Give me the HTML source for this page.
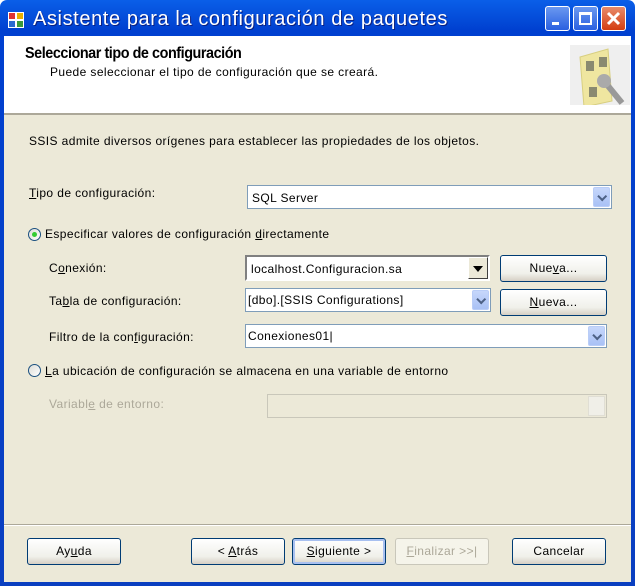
<!DOCTYPE html>
<html><head><meta charset="utf-8"><style>
*{margin:0;padding:0;box-sizing:border-box}
body{width:635px;height:586px;overflow:hidden;font-family:"Liberation Sans",sans-serif;font-size:12px;letter-spacing:0.4px;color:#000;background:#fff}
.win{position:absolute;left:0;top:0;width:635px;height:586px;background:linear-gradient(#0a5fe8,#0040d0 30px,#0a3fc0);border-radius:7px 7px 0 0}
.title{position:absolute;left:33px;top:8px;color:#fff;font-size:20px;font-weight:normal;text-shadow:1px 1px #0a1f80;letter-spacing:0.6px}
.client{position:absolute;left:4px;top:36px;width:627px;height:546px;background:#ece9d8}
.hdr{position:absolute;left:0;top:0;width:627px;height:79px;background:#fff;border-bottom:2px solid #aca899}
.a{position:absolute;white-space:nowrap}
.cb{position:absolute;background:#fff;border:1px solid #7f9db9}
.dd{position:absolute;right:1px;top:1px;bottom:1px;width:17px;background:linear-gradient(#c6d7fb,#a9c1f5);border-radius:2px;border:1px solid #b9cdf7}
.dd:after{content:"";position:absolute;left:4px;top:7px;width:5px;height:5px;border-right:2px solid #4d6185;border-bottom:2px solid #4d6185;transform:rotate(45deg) translate(-1px,-2px)}
.btn{position:absolute;height:27px;border:1px solid #003c74;border-radius:3px;background:linear-gradient(#fff,#f0f0ea 70%,#d6d0c5);text-align:center;line-height:25px}
u{text-decoration:underline}
.rad{position:absolute;width:13px;height:13px;border:1px solid #1c5180;border-radius:50%;background:linear-gradient(135deg,#dcdcd6,#fff)}
</style></head><body>
<div class="win">
<svg style="position:absolute;left:8px;top:12px" width="16" height="16"><rect x="0" y="0" width="16" height="16" fill="#fff"/><rect x="1" y="1" width="6" height="6" fill="#d33"/><rect x="9" y="1" width="6" height="6" fill="#e9b000"/><rect x="1" y="9" width="6" height="6" fill="#2a6ad0"/><rect x="9" y="9" width="6" height="6" fill="#3a9a3a"/></svg>
<div class="title">Asistente para la configuración de paquetes</div>
<div style="position:absolute;left:545px;top:6px;width:25px;height:25px;border:1px solid #fff;border-radius:3px;background:linear-gradient(#6a98f0,#2a60e0)"><div style="position:absolute;left:6px;top:15px;width:7px;height:3px;background:#fff"></div></div>
<div style="position:absolute;left:573px;top:6px;width:25px;height:25px;border:1px solid #fff;border-radius:3px;background:linear-gradient(#6a98f0,#2a60e0)"><div style="position:absolute;left:5px;top:5px;width:13px;height:13px;border:2px solid #fff;border-top-width:3px"></div></div>
<div style="position:absolute;left:601px;top:6px;width:25px;height:25px;border:1px solid #fff;border-radius:3px;background:linear-gradient(#e88a6a,#d43d12)"><svg width="23" height="23" style="position:absolute;left:0;top:0"><path d="M6 6L17 17M17 6L6 17" stroke="#fff" stroke-width="3"/></svg></div>
<div class="client">
<div class="hdr">
<div class="a" style="left:21px;top:9px;font-size:16px;font-weight:bold;letter-spacing:-0.5px;transform:scaleX(0.9);transform-origin:left">Seleccionar tipo de configuración</div>
<div class="a" style="left:46px;top:29px">Puede seleccionar el tipo de configuración que se creará.</div>
<svg style="position:absolute;left:566px;top:9px" width="60" height="60"><rect width="60" height="60" fill="#efefef"/><path d="M10 12L38 4L42 56L14 62Z" fill="#efe6a0" stroke="#d8cf80"/><rect x="16" y="16" width="8" height="10" fill="#8a8a70"/><rect x="29" y="12" width="8" height="10" fill="#8a8a70"/><rect x="19" y="42" width="8" height="10" fill="#8a8a70"/><path d="M34 36L52 58" stroke="#999" stroke-width="6"/><circle cx="34" cy="36" r="7" fill="#aaa"/></svg>
</div>
<div class="a" style="left:25px;top:98px">SSIS admite diversos orígenes para establecer las propiedades de los objetos.</div>
<div class="a" style="left:25px;top:150px"><u>T</u>ipo de configuración:</div>
<div class="cb" style="left:243px;top:149px;width:365px;height:24px"><span class="a" style="left:4px;top:5px">SQL Server</span><div class="dd"></div></div>
<div class="rad" style="left:24px;top:192px"><div style="position:absolute;left:3px;top:3px;width:5px;height:5px;border-radius:50%;background:#3c3"></div></div>
<div class="a" style="left:41px;top:191px">Especificar valores de configuración <u>d</u>irectamente</div>
<div class="a" style="left:45px;top:225px">C<u>o</u>nexión:</div>
<div style="position:absolute;left:241px;top:219px;width:245px;height:26px;background:#fff;border:2px solid;border-color:#808080 #fff #fff #808080"><span class="a" style="left:4px;top:5px">localhost.Configuracion.sa</span><div style="position:absolute;right:0;top:0;width:20px;height:22px;background:#ece9d8;border:1px solid;border-color:#fff #404040 #404040 #fff"><div style="position:absolute;left:4px;top:8px;border-left:5px solid transparent;border-right:5px solid transparent;border-top:6px solid #000"></div></div></div>
<div class="btn" style="left:496px;top:219px;width:107px">Nue<u>v</u>a...</div>
<div class="a" style="left:45px;top:258px">Ta<u>b</u>la de configuración:</div>
<div class="cb" style="left:241px;top:252px;width:246px;height:24px"><span class="a" style="left:2px;top:4px">[dbo].[SSIS Configurations]</span><div class="dd"></div></div>
<div class="btn" style="left:496px;top:253px;width:107px"><u>N</u>ueva...</div>
<div class="a" style="left:45px;top:294px">Filtro de la con<u>f</u>iguración:</div>
<div class="cb" style="left:241px;top:288px;width:362px;height:24px"><span class="a" style="left:2px;top:4px">Conexiones01|</span><div class="dd"></div></div>
<div class="rad" style="left:24px;top:328px"></div>
<div class="a" style="left:41px;top:328px"><u>L</u>a ubicación de configuración se almacena en una variable de entorno</div>
<div class="a" style="left:45px;top:361px;color:#aca899">Variabl<u>e</u> de entorno:</div>
<div style="position:absolute;left:263px;top:358px;width:340px;height:24px;border:1px solid #c9c7ba;background:#ece9d8"><div style="position:absolute;right:1px;top:1px;width:17px;height:20px;border:1px solid #e0ded4;background:#f0efe8"></div></div>
<div style="position:absolute;left:0;top:488px;width:627px;height:2px;border-top:1px solid #aca899;border-bottom:1px solid #fff"></div>
<div class="btn" style="left:23px;top:502px;width:94px">Ay<u>u</u>da</div>
<div class="btn" style="left:187px;top:502px;width:94px">&lt; <u>A</u>trás</div>
<div class="btn" style="left:288px;top:502px;width:94px;box-shadow:inset 0 0 0 2px #a8c0f0"><u>S</u>iguiente &gt;</div>
<div class="btn" style="left:391px;top:502px;width:94px;border-color:#c9c7ba;background:#f5f4ea;color:#aca899"><u>F</u>inalizar &gt;&gt;|</div>
<div class="btn" style="left:508px;top:502px;width:94px">Cancelar</div>
</div>
</div>
</body></html>
